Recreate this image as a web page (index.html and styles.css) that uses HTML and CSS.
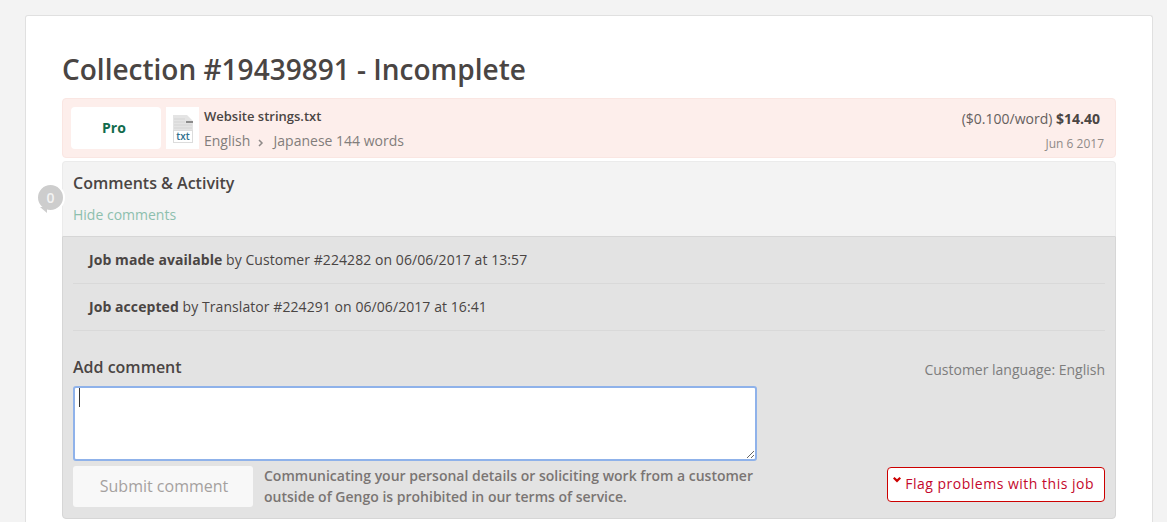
FILE: index.html
```html
<!DOCTYPE html>
<html lang="en">
<head>
    <meta charset="UTF-8">
    <meta name="viewport" content="width=device-width, initial-scale=1.0">
    <title>Collection #19439891</title>
    <link rel="stylesheet" href="styles.css">
</head>
<body>
    <div class="page">
        <h1 class="title">Collection #19439891 - Incomplete</h1>

        <div class="job">
            <div class="tier">Pro</div>
            <div class="file-icon">
                <svg width="22" height="28" viewBox="0 0 22 28">
                    <path d="M1 0h14l6 6v21H1z" fill="#e4e4e4"/>
                    <path d="M14 6h7v2h-7z" fill="#8c8c8c"/>
                    <path d="M2 4h11M2 7h11M2 10h18M2 13h18" stroke="#d4d4d4" stroke-width="1"/>
                    <rect x="1.5" y="15.5" width="19" height="12" fill="#fff" stroke="#dcdcdc" stroke-width="1"/>
                </svg>
                <span class="file-ext">txt</span>
            </div>
            <div class="job-info">
                <div class="file-name">Website strings.txt</div>
                <div class="job-langs">English <svg class="arrow" width="6" height="8" viewBox="0 0 6 8"><path d="M1 1l3 3l-3 3" fill="none" stroke="#8f8a88" stroke-width="1.5"/></svg> Japanese 144 words</div>
            </div>
            <div class="job-price">
                <div class="price">($0.100/word) <b>$14.40</b></div>
                <div class="job-date">Jun 6 2017</div>
            </div>
        </div>

        <div class="comments">
            <div class="bubble">0</div>
            <div class="comments-head">
                <h2 class="comments-title">Comments &amp; Activity</h2>
                <a class="hide-link">Hide comments</a>
            </div>
            <div class="comments-body">
                <div class="activity"><b>Job made available</b> by Customer #224282 on 06/06/2017 at 13:57</div>
                <div class="activity"><b>Job accepted</b> by Translator #224291 on 06/06/2017 at 16:41</div>

                <div class="add-row">
                    <h3 class="add-title">Add comment</h3>
                    <span class="customer-lang">Customer language: English</span>
                </div>
                <div class="input-wrap">
                    <textarea class="comment-input"></textarea>
                    <span class="caret"></span>
                </div>
                <div class="submit-row">
                    <button class="submit-btn">Submit comment</button>
                    <p class="notice">Communicating your personal details or soliciting work from a customer outside of Gengo is prohibited in our terms of service.</p>
                    <a class="flag-btn">
                        <svg class="flag-icon" width="8" height="6" viewBox="0 0 8 6"><path d="M0 1.5L1.5 0L4 2.2L6.5 0L8 1.5L4 5.5z" fill="#c00"/></svg>
                        Flag problems with this job
                    </a>
                </div>
            </div>
        </div>
    </div>
</body>
</html>
```
FILE: styles.css
```css
* {
    box-sizing: border-box;
}

html, body {
    height: 522px;
    overflow: hidden;
}

body {
    margin: 0;
    padding: 15px 25px 0 25px;
    background-color: #f3f3f3;
    font-family: "Open Sans", sans-serif;
    color: #4a4543;
}

.page {
    width: 1128px;
    height: 507px;
    padding: 32px 36px 0 36px;
    background-color: #fff;
    border: 1px solid #e0e0e0;
    border-bottom: 0;
    border-radius: 3px 3px 0 0;
}

.title {
    margin: 0 0 8px 0;
    font-size: 28px;
    line-height: 42px;
    font-weight: 600;
}

.job {
    display: flex;
    align-items: flex-start;
    height: 60px;
    padding: 8px 10px 0 8px;
    background-color: #fdeeeb;
    border: 1px solid #fae6e2;
    border-radius: 4px;
}

.tier {
    width: 90px;
    height: 42px;
    margin-right: 5px;
    padding-right: 4px;
    background-color: #fff;
    border-radius: 4px;
    color: #116b4c;
    font-size: 14px;
    font-weight: 700;
    line-height: 41px;
    text-align: center;
}

.file-icon {
    position: relative;
    width: 33px;
    height: 42px;
    padding: 8px 0 0 6px;
    background-color: #fff;
}

.file-icon svg {
    display: block;
}

.file-ext {
    position: absolute;
    left: 6px;
    top: 23px;
    width: 22px;
    color: #2f6f8c;
    font-size: 10px;
    font-weight: 600;
    line-height: 13px;
    text-align: center;
}

.job-info {
    flex: 1;
    padding-left: 5px;
}

.file-name {
    font-size: 13px;
    font-weight: 600;
    line-height: 18px;
}

.job-langs {
    margin-top: 6px;
    color: #827d7b;
    font-size: 14px;
    line-height: 19px;
}

.arrow {
    margin: 0 6px 0 4px;
    vertical-align: -1px;
}

.job-price {
    text-align: right;
}

.price {
    padding: 2px 5px 0 0;
    color: #65605e;
    font-size: 14px;
    line-height: 19px;
}

.price b {
    font-weight: 700;
    color: #4a4543;
}

.job-date {
    margin-top: 8px;
    padding-right: 1px;
    color: #8f8a88;
    font-size: 12px;
    line-height: 16px;
}

.comments {
    position: relative;
    margin-top: 3px;
}

.bubble {
    position: absolute;
    left: -26px;
    top: 22px;
    width: 29px;
    height: 29px;
    background-color: #cdcdcd;
    border: 2px solid #fff;
    border-radius: 50%;
    color: #f3f3f3;
    font-size: 14px;
    font-weight: 600;
    line-height: 25px;
    text-align: center;
}

.bubble::after {
    content: "";
    position: absolute;
    left: 2px;
    bottom: -3px;
    border-top: 6px solid #cdcdcd;
    border-left: 7px solid transparent;
}

.comments-head {
    height: 75px;
    padding: 10px 10px 0 10px;
    background-color: #f3f3f3;
    border: 1px solid #ebebeb;
    border-bottom: 0;
    border-radius: 4px 4px 0 0;
}

.comments-title {
    margin: 0;
    font-size: 16px;
    font-weight: 600;
    line-height: 22px;
}

.hide-link {
    display: block;
    margin-top: 11px;
    color: #8dbfae;
    font-size: 14px;
    line-height: 19px;
}

.comments-body {
    height: 283px;
    padding: 0 10px;
    background-color: #e3e3e3;
    border: 1px solid #d6d6d6;
    border-radius: 0 0 4px 4px;
}

.activity {
    height: 47px;
    padding-left: 16px;
    border-bottom: 1px solid #d9d9d9;
    font-size: 14px;
    line-height: 46px;
    letter-spacing: 0.07px;
}

.activity b {
    font-weight: 700;
}

.add-row {
    display: flex;
    justify-content: space-between;
    align-items: center;
    height: 24px;
    margin-top: 24px;
}

.add-title {
    margin: 0;
    font-size: 16px;
    font-weight: 600;
    line-height: 24px;
}

.customer-lang {
    position: relative;
    top: 2px;
    color: #7d7d7d;
    font-size: 14px;
}

.input-wrap {
    position: relative;
    width: 684px;
    margin-top: 7px;
}

.comment-input {
    display: block;
    width: 684px;
    height: 75px;
    background-color: #fff;
    border: 2px solid #8fb2ea;
    border-radius: 3px;
    outline: none;
}

.caret {
    position: absolute;
    left: 6px;
    top: 2px;
    width: 1px;
    height: 19px;
    background-color: #333;
}

.submit-row {
    display: flex;
    align-items: flex-start;
    margin-top: 5px;
}

.submit-btn {
    flex: none;
    width: 180px;
    height: 41px;
    padding: 0 0 2px 2px;
    background-color: #f8f8f8;
    border: none;
    border-radius: 3px;
    color: #a5a19f;
    font-family: "Open Sans", sans-serif;
    font-size: 16px;
}

.notice {
    width: 500px;
    margin: -1px 0 0 11px;
    color: #7a7573;
    font-size: 14px;
    font-weight: 600;
    line-height: 21px;
}

.flag-btn {
    flex: none;
    height: 35px;
    margin: 1px 0 0 auto;
    padding: 0 10px 0 5px;
    background-color: #fff;
    border: 1px solid #c00;
    border-radius: 4px;
    color: #c4082c;
    font-size: 14px;
    line-height: 32px;
    letter-spacing: 0.5px;
    white-space: nowrap;
}

.flag-icon {
    vertical-align: 6px;
}
```
